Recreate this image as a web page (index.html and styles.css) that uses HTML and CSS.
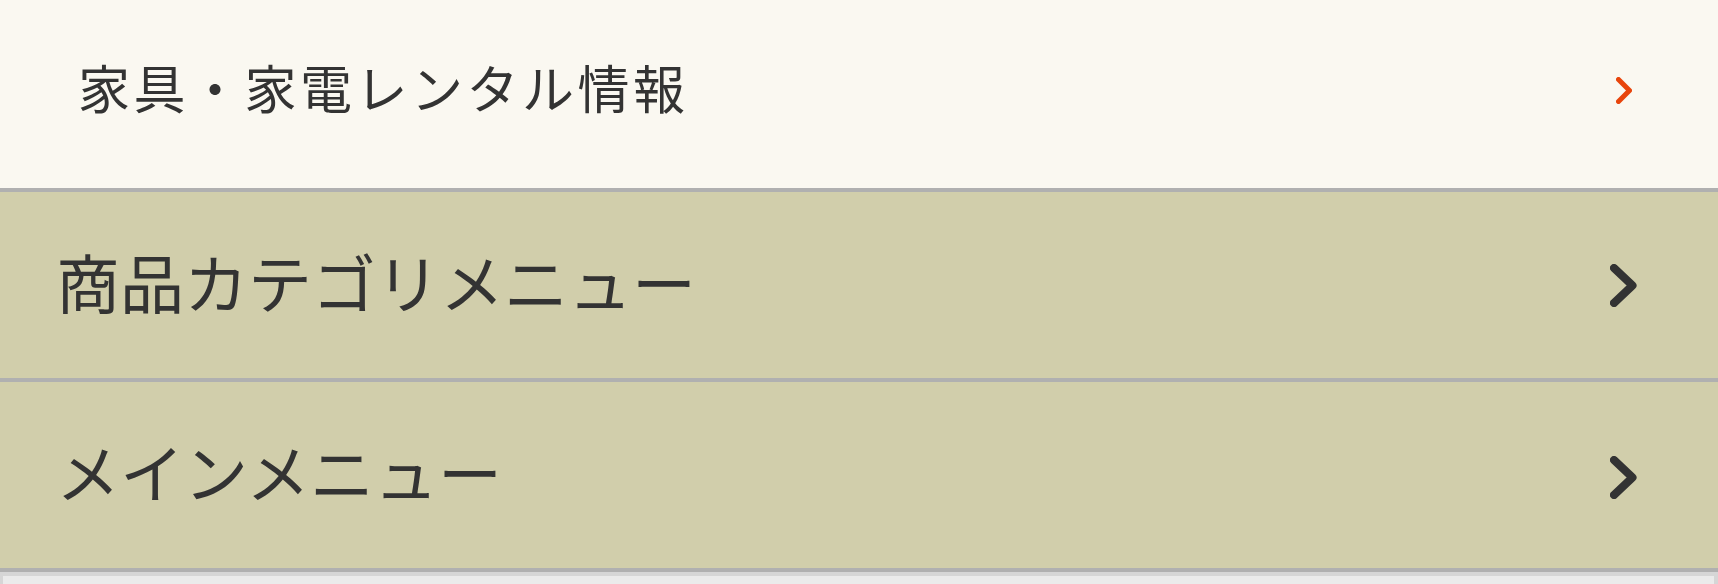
FILE: index.html
```html
<!DOCTYPE html>
<html lang="ja">
<head>
<meta charset="utf-8">
<link rel="stylesheet" href="styles.css">
</head>
<body>
<nav class="menu">
  <a class="item item-top" href="#">
    <span class="label label-top">家具・家電レンタル情報</span>
    <svg class="chev chev-small" width="16" height="27" viewBox="0 0 16 27"><polyline points="2.5,2.5 13.5,13.5 2.5,24.5" fill="none" stroke="#e8450c" stroke-width="5" stroke-linecap="round" stroke-linejoin="round"/></svg>
  </a>
  <a class="item item-cat" href="#">
    <span class="label">商品カテゴリメニュー</span>
    <svg class="chev" width="27" height="43" viewBox="0 0 27 43"><polyline points="4,4 22.5,21.5 4,39" fill="none" stroke="#333333" stroke-width="8" stroke-linecap="round" stroke-linejoin="round"/></svg>
  </a>
  <a class="item item-cat" href="#">
    <span class="label">メインメニュー</span>
    <svg class="chev" width="27" height="43" viewBox="0 0 27 43"><polyline points="4,4 22.5,21.5 4,39" fill="none" stroke="#333333" stroke-width="8" stroke-linecap="round" stroke-linejoin="round"/></svg>
  </a>
</nav>
<div class="footer"><div class="footer-inner"></div></div>
</body>
</html>
```

FILE: styles.css
```css
html, body {
  margin: 0;
  padding: 0;
  background: #faf8f1;
}
body {
  width: 1718px;
  height: 584px;
  overflow: hidden;
  font-family: "Noto Sans CJK JP", "Noto Sans", sans-serif;
  color: #333333;
}
.menu {
  display: flex;
  flex-direction: column;
}
.item {
  display: flex;
  align-items: center;
  justify-content: space-between;
  box-sizing: content-box;
  border-bottom: 4px solid #b0b0b0;
  text-decoration: none;
  color: #333333;
}
.item-top {
  height: 188px;
  background: #faf8f1;
  padding: 0 86px 0 78px;
}
.item-cat {
  height: 186px;
  background: #d1ceab;
  padding: 0 81px 0 56px;
}
.label {
  font-size: 64px;
  line-height: 1;
  white-space: nowrap;
  position: relative;
  top: -5px;
}
.label-top {
  font-size: 52px;
  letter-spacing: 3.5px;
  top: -7px;
}
.chev {
  display: block;
  flex: none;
}
.chev-small {
  position: relative;
  top: -4px;
}
.item-cat:last-child .chev {
  position: relative;
  top: 2px;
}
.footer {
  height: 12px;
  background: #d6d6d6;
  padding: 4px 4px 0 3px;
  box-sizing: border-box;
}
.footer-inner {
  height: 100%;
  background: #ebebeb;
}
```
